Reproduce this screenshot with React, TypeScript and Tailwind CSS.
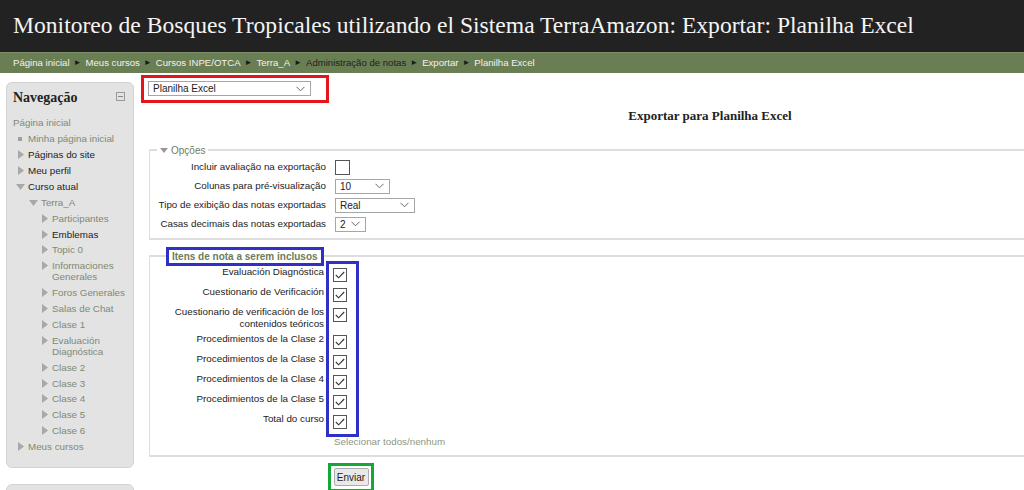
import React from "react";

const navItems: { label: string[]; level: number; icon: "none" | "dot" | "right" | "down"; dark?: boolean }[] = [
  { label: ["Página inicial"], level: 0, icon: "none" },
  { label: ["Minha página inicial"], level: 0, icon: "dot" },
  { label: ["Páginas do site"], level: 0, icon: "right", dark: true },
  { label: ["Meu perfil"], level: 0, icon: "right", dark: true },
  { label: ["Curso atual"], level: 0, icon: "down", dark: true },
  { label: ["Terra_A"], level: 1, icon: "down" },
  { label: ["Participantes"], level: 2, icon: "right" },
  { label: ["Emblemas"], level: 2, icon: "right", dark: true },
  { label: ["Topic 0"], level: 2, icon: "right" },
  { label: ["Informaciones", "Generales"], level: 2, icon: "right" },
  { label: ["Foros Generales"], level: 2, icon: "right" },
  { label: ["Salas de Chat"], level: 2, icon: "right" },
  { label: ["Clase 1"], level: 2, icon: "right" },
  { label: ["Evaluación", "Diagnóstica"], level: 2, icon: "right" },
  { label: ["Clase 2"], level: 2, icon: "right" },
  { label: ["Clase 3"], level: 2, icon: "right" },
  { label: ["Clase 4"], level: 2, icon: "right" },
  { label: ["Clase 5"], level: 2, icon: "right" },
  { label: ["Clase 6"], level: 2, icon: "right" },
  { label: ["Meus cursos"], level: 0, icon: "right" },
];

const crumbs = [
  "Página inicial",
  "Meus cursos",
  "Cursos INPE/OTCA",
  "Terra_A",
  "Administração de notas",
  "Exportar",
  "Planilha Excel",
];

const gradeItems = [
  ["Evaluación Diagnóstica"],
  ["Cuestionario de Verificación"],
  ["Cuestionario de verificación de los", "contenidos teóricos"],
  ["Procedimientos de la Clase 2"],
  ["Procedimientos de la Clase 3"],
  ["Procedimientos de la Clase 4"],
  ["Procedimientos de la Clase 5"],
  ["Total do curso"],
];

const Chevron = () => (
  <svg width="9" height="6" viewBox="0 0 9 6" className="shrink-0">
    <path d="M0.5 0.8 L4.5 4.8 L8.5 0.8" fill="none" stroke="#666" strokeWidth="1" />
  </svg>
);

const FakeSelect = ({ value, width }: { value: string; width: string }) => (
  <div
    className={`${width} h-[15px] flex items-center justify-between border border-[#a6a6a6] bg-white pl-[4px] pr-[5px] text-[10px] text-[#222]`}
  >
    <span>{value}</span>
    <Chevron />
  </div>
);

const CheckBox = ({ checked }: { checked: boolean }) => (
  <div className="w-[14px] h-[14px] border border-[#555] bg-white flex items-center justify-center">
    {checked && (
      <svg width="10" height="8" viewBox="0 0 10 8">
        <path d="M0.8 4 L3.6 6.8 L9.2 1" fill="none" stroke="#333" strokeWidth="1.1" />
      </svg>
    )}
  </div>
);

const NavIcon = ({ kind }: { kind: string }) => (
  <div className="w-[11px] shrink-0 flex">
    {kind === "dot" && <span className="w-[4px] h-[4px] bg-[#a0a0a0] mt-[4px] ml-[1px]" />}
    {kind === "right" && (
      <svg width="6" height="9" viewBox="0 0 6 9" className="mt-[1px] ml-[1px]">
        <path d="M0 0 L6 4.5 L0 9 Z" fill="#a8a8a8" />
      </svg>
    )}
    {kind === "down" && (
      <svg width="9" height="6" viewBox="0 0 9 6" className="mt-[3px] -ml-[1px]">
        <path d="M0 0 L9 0 L4.5 6 Z" fill="#a8a8a8" />
      </svg>
    )}
  </div>
);

export default function App() {
  return (
    <div className="w-[1024px] h-[490px] overflow-hidden bg-white font-['Liberation_Sans',Arial,sans-serif]">
      {/* header */}
      <div className="h-[52px] bg-[#222222] flex items-center pl-[13px]">
        <h1 className="text-[#f4f4f4] text-[23.6px] font-['Liberation_Serif',Georgia,serif] whitespace-nowrap">
          Monitoreo de Bosques Tropicales utilizando el Sistema TerraAmazon: Exportar: Planilha Excel
        </h1>
      </div>
      <div className="h-[21px] bg-[#6a7e54] border-t border-[#7d8f69] flex items-center pl-[13px] text-[9.6px] text-[#f2f2f2] gap-[4px]">
        {crumbs.map((c, i) => (
          <React.Fragment key={c}>
            <span className={c === "Administração de notas" ? "text-[#1e1e1e]" : ""}>{c}</span>
            {i < crumbs.length - 1 && <span className="text-[8px] text-[#1a1a1a]">►</span>}
          </React.Fragment>
        ))}
      </div>

      <div className="flex">
        {/* sidebar */}
        <div className="w-[141px] shrink-0 pl-[6px] pr-[7px] pt-[9px] flex flex-col gap-[16px]">
          <div className="bg-[#e3e3e3] border border-[#d2d2d2] rounded-[6px] pt-[4px] pb-[12px] pl-[6px] pr-[6px]">
            <div className="flex items-center justify-between mb-[7px]">
              <span className="font-['Liberation_Serif',Georgia,serif] font-bold text-[14px] text-[#222]">Navegação</span>
              <span className="w-[9px] h-[9px] border border-[#999] flex items-center justify-center mr-[2px] -mt-[3px]">
                <span className="w-[5px] h-[1px] bg-[#888]" />
              </span>
            </div>
            <div className="flex flex-col text-[9.8px] leading-[11px]">
              {navItems.map((it) => (
                <div
                  key={it.label[0]}
                  className={`flex py-[2.45px] ${
                    it.level === 0 ? (it.icon === "none" ? "" : "pl-[4px]") : it.level === 1 ? "pl-[17px]" : "pl-[28px]"
                  }`}
                >
                  {it.icon !== "none" && <NavIcon kind={it.icon} />}
                  <div className={it.dark ? "text-[#222]" : "text-[#7e8a73]"}>
                    {it.label.map((l) => (
                      <div key={l}>{l}</div>
                    ))}
                  </div>
                </div>
              ))}
            </div>
          </div>
          <div className="bg-[#e3e3e3] border border-[#d2d2d2] rounded-[6px] h-[40px]" />
        </div>

        {/* main */}
        <div className="flex-1 pt-[2px]">
          <div className="w-[188px] h-[28px] border-[3px] border-[#e3151d] pl-[4px] pt-[3px]">
            <FakeSelect value="Planilha Excel" width="w-[163px]" />
          </div>

          <div className="pl-[255px] text-center mt-[3px] font-['Liberation_Serif',Georgia,serif] font-bold text-[13px] text-[#222]">
            Exportar para Planilha Excel
          </div>

          {/* Opções */}
          <fieldset className="ml-[8px] mt-[17px] border-t-2 border-l border-b-2 border-[#dedede] pb-[6px]">
            <legend className="ml-[7px] px-[3px] text-[10px] text-[#6c7d5c] flex items-center gap-[3px]">
              <svg width="8" height="5" viewBox="0 0 8 5">
                <path d="M0 0 L8 0 L4 5 Z" fill="#999" />
              </svg>
              Opções
            </legend>
            <div className="grid grid-cols-[176px_auto] gap-x-[9px] gap-y-[4px] text-[9.8px] text-[#222] items-center justify-start pt-[2px]">
              <div className="text-right">Incluir avaliação na exportação</div>
              <div className="w-[15px] h-[15px] border border-[#555] bg-white" />
              <div className="text-right">Colunas para pré-visualização</div>
              <FakeSelect value="10" width="w-[55px]" />
              <div className="text-right whitespace-nowrap">Tipo de exibição das notas exportadas</div>
              <FakeSelect value="Real" width="w-[80px]" />
              <div className="text-right whitespace-nowrap">Casas decimais das notas exportadas</div>
              <FakeSelect value="2" width="w-[31px]" />
            </div>
          </fieldset>

          {/* Itens */}
          <fieldset className="relative ml-[8px] mt-[7px] border-t-2 border-l border-b-2 border-[#dedede] pb-[7px]">
            <legend className="ml-[16px] text-[10px] text-[#6c7d5c] border-[3px] border-[#2f31c6] px-[3px] py-[1px] leading-[11px] font-semibold">
              Itens de nota a serem inclusos
            </legend>
            <div className="absolute left-[176px] -top-[5px] w-[33px] h-[176px] border-[3px] border-[#2f31c6]" />
            <div className="flex flex-col text-[9.8px] leading-[12px] text-[#222] pt-[2px]">
              {gradeItems.map((g) => (
                <div
                  key={g[0]}
                  className={`grid grid-cols-[174px_auto] gap-x-[9px] items-start ${g.length > 1 ? "h-[27px]" : "h-[20px]"}`}
                >
                  <div className="text-right -mt-[2px]">
                    {g.map((l) => (
                      <div key={l}>{l}</div>
                    ))}
                  </div>
                  <CheckBox checked />
                </div>
              ))}
            </div>
            <div className="pl-[184px] pt-[1px] text-[9.8px] leading-[12px] text-[#8d9883]">Selecionar todos/nenhum</div>
          </fieldset>

          <div className="ml-[187px] mt-[6px] w-[46px] h-[29px] border-[3px] border-[#15a836] flex items-center justify-center">
            <button className="w-[35px] h-[18px] bg-[#e9e9e9] border border-[#adadad] rounded-[2px] text-[10px] text-[#222]">
              Enviar
            </button>
          </div>
        </div>
      </div>
    </div>
  );
}
